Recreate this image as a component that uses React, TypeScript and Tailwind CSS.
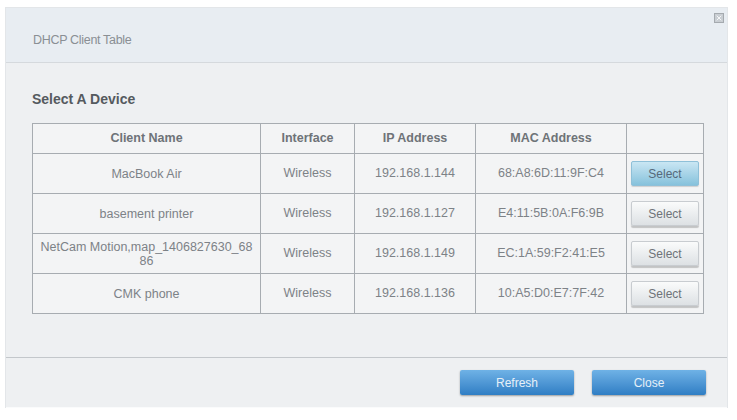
import { X } from 'lucide-react'

type Client = { name: string; iface: string; ip: string; mac: string; active?: boolean }

const clients: Client[] = [
  { name: 'MacBook Air', iface: 'Wireless', ip: '192.168.1.144', mac: '68:A8:6D:11:9F:C4', active: true },
  { name: 'basement printer', iface: 'Wireless', ip: '192.168.1.127', mac: 'E4:11:5B:0A:F6:9B' },
  { name: 'NetCam Motion,map_1406827630_6886', iface: 'Wireless', ip: '192.168.1.149', mac: 'EC:1A:59:F2:41:E5' },
  { name: 'CMK phone', iface: 'Wireless', ip: '192.168.1.136', mac: '10:A5:D0:E7:7F:42' },
]

export default function App() {
  return (
    <div className="h-[420px] w-[737px] bg-white pl-[5px] pt-[7px] font-['Liberation_Sans',Arial,sans-serif]">
      <div className="flex h-[401px] w-[723px] flex-col border border-[#e3e6e9] bg-[#eef0f2]">
        {/* header */}
        <div className="relative flex h-[55px] items-end border-b border-[#d5d9dd] bg-[#e8edf2] pb-[12px] pl-[27px]">
          <span className="text-[12.5px] tracking-tight text-[#8a8f94]">DHCP Client Table</span>
          <span className="absolute right-[3px] top-[5px] flex h-[10px] w-[10px] items-center justify-center border border-[#a5aaaf] bg-[#c9ced3]">
            <X size={8} strokeWidth={2.5} className="text-white" />
          </span>
        </div>

        <div className="px-[26px] pt-[26px]">
          <h2 className="text-[14px] font-bold text-[#555a5f]">Select A Device</h2>
          <table className="mt-[13px] w-[672px] table-fixed border-collapse border border-[#9ea3a8] text-[12.5px] text-[#7d8287]">
            <thead>
              <tr className="h-[30px] bg-[#f3f4f5]">
                <th className="w-[228px] border border-[#a7acb1] font-bold text-[#6e7378]">Client Name</th>
                <th className="w-[94px] border border-[#a7acb1] font-bold text-[#6e7378]">Interface</th>
                <th className="w-[121px] border border-[#a7acb1] font-bold text-[#6e7378]">IP Address</th>
                <th className="w-[151px] border border-[#a7acb1] font-bold text-[#6e7378]">MAC Address</th>
                <th className="border border-[#a7acb1]" />
              </tr>
            </thead>
            <tbody>
              {clients.map((c) => (
                <tr key={c.mac} className="h-[40px] bg-[#f3f4f5]">
                  <td className="break-all border border-[#a7acb1] px-[5px] text-center leading-[14px]">{c.name}</td>
                  <td className="border border-[#a7acb1] text-center">{c.iface}</td>
                  <td className="border border-[#a7acb1] text-center">{c.ip}</td>
                  <td className="border border-[#a7acb1] text-center">{c.mac}</td>
                  <td className="border border-[#a7acb1] text-center">
                    <button
                      type="button"
                      className={
                        c.active
                          ? 'h-[25px] w-[68px] rounded-[2px] border border-[#8fc0d8] bg-gradient-to-b from-[#c9e6f3] to-[#86c2dc] text-[12px] text-[#55697a] shadow-[0_1px_1px_rgba(0,0,0,0.15)]'
                          : 'h-[25px] w-[68px] rounded-[2px] border border-[#c8ccd0] bg-gradient-to-b from-[#fafbfb] to-[#dde1e4] text-[12px] text-[#6e7378] shadow-[0_2px_1px_rgba(0,0,0,0.2)]'
                      }
                    >
                      Select
                    </button>
                  </td>
                </tr>
              ))}
            </tbody>
          </table>
        </div>

        <div className="mt-auto border-t border-[#c3c7cb] shadow-[0_1px_0_#fafbfc]">
          <div className="flex h-[49px] items-center justify-end gap-[18px] pr-[21px]">
            <button
              type="button"
              className="h-[25px] w-[114px] rounded-[2px] bg-gradient-to-b from-[#6fb2e6] to-[#2f7ec4] text-[12px] text-[#e6f0f8] shadow-[0_1px_2px_rgba(0,0,0,0.35)]"
            >
              Refresh
            </button>
            <button
              type="button"
              className="h-[25px] w-[114px] rounded-[2px] bg-gradient-to-b from-[#6fb2e6] to-[#2f7ec4] text-[12px] text-[#e6f0f8] shadow-[0_1px_2px_rgba(0,0,0,0.35)]"
            >
              Close
            </button>
          </div>
        </div>
      </div>
    </div>
  )
}
